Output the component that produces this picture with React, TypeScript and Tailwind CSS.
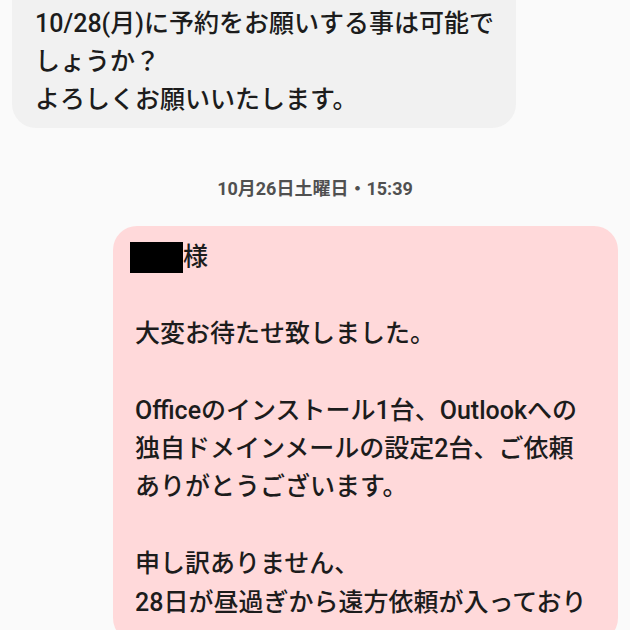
import React from "react";

export default function App() {
  const font = { fontFamily: 'Roboto, "Noto Sans CJK JP", sans-serif' };
  return (
    <div
      className="h-[630px] w-[630px] overflow-hidden bg-[#fafafa] text-[#1c1c1c]"
      style={font}
    >
      <div className="ml-[12px] mt-[-30px] w-[504px] rounded-[24px] bg-[#f1f1f1] pl-[23px] pr-[6px] pt-[35px] pb-[9px] text-[25px] font-medium leading-[38px]">
        <div>10/28(月)に予約をお願いする事は可能で</div>
        <div>しょうか？</div>
        <div>よろしくお願いいたします。</div>
      </div>
      <div className="mt-[51px] text-center text-[18px] font-bold leading-[20px] text-[#505050]">
        10月26日土曜日・15:39
      </div>
      <div className="ml-[113px] mt-[27px] w-[505px] rounded-[24px] bg-[#ffd9da] pl-[22px] pr-[4px] pt-[12px] pb-[20px] text-[25px] font-medium leading-[38.4px]">
        <div className="flex items-center">
          <span className="ml-[-5px] inline-block h-[31px] w-[53px] bg-black" />
          <span>様</span>
        </div>
        <div>&nbsp;</div>
        <div>大変お待たせ致しました。</div>
        <div>&nbsp;</div>
        <div>Officeのインストール1台、Outlookへの</div>
        <div>独自ドメインメールの設定2台、ご依頼</div>
        <div>ありがとうございます。</div>
        <div>&nbsp;</div>
        <div>申し訳ありません、</div>
        <div>28日が昼過ぎから遠方依頼が入っており</div>
      </div>
    </div>
  );
}
